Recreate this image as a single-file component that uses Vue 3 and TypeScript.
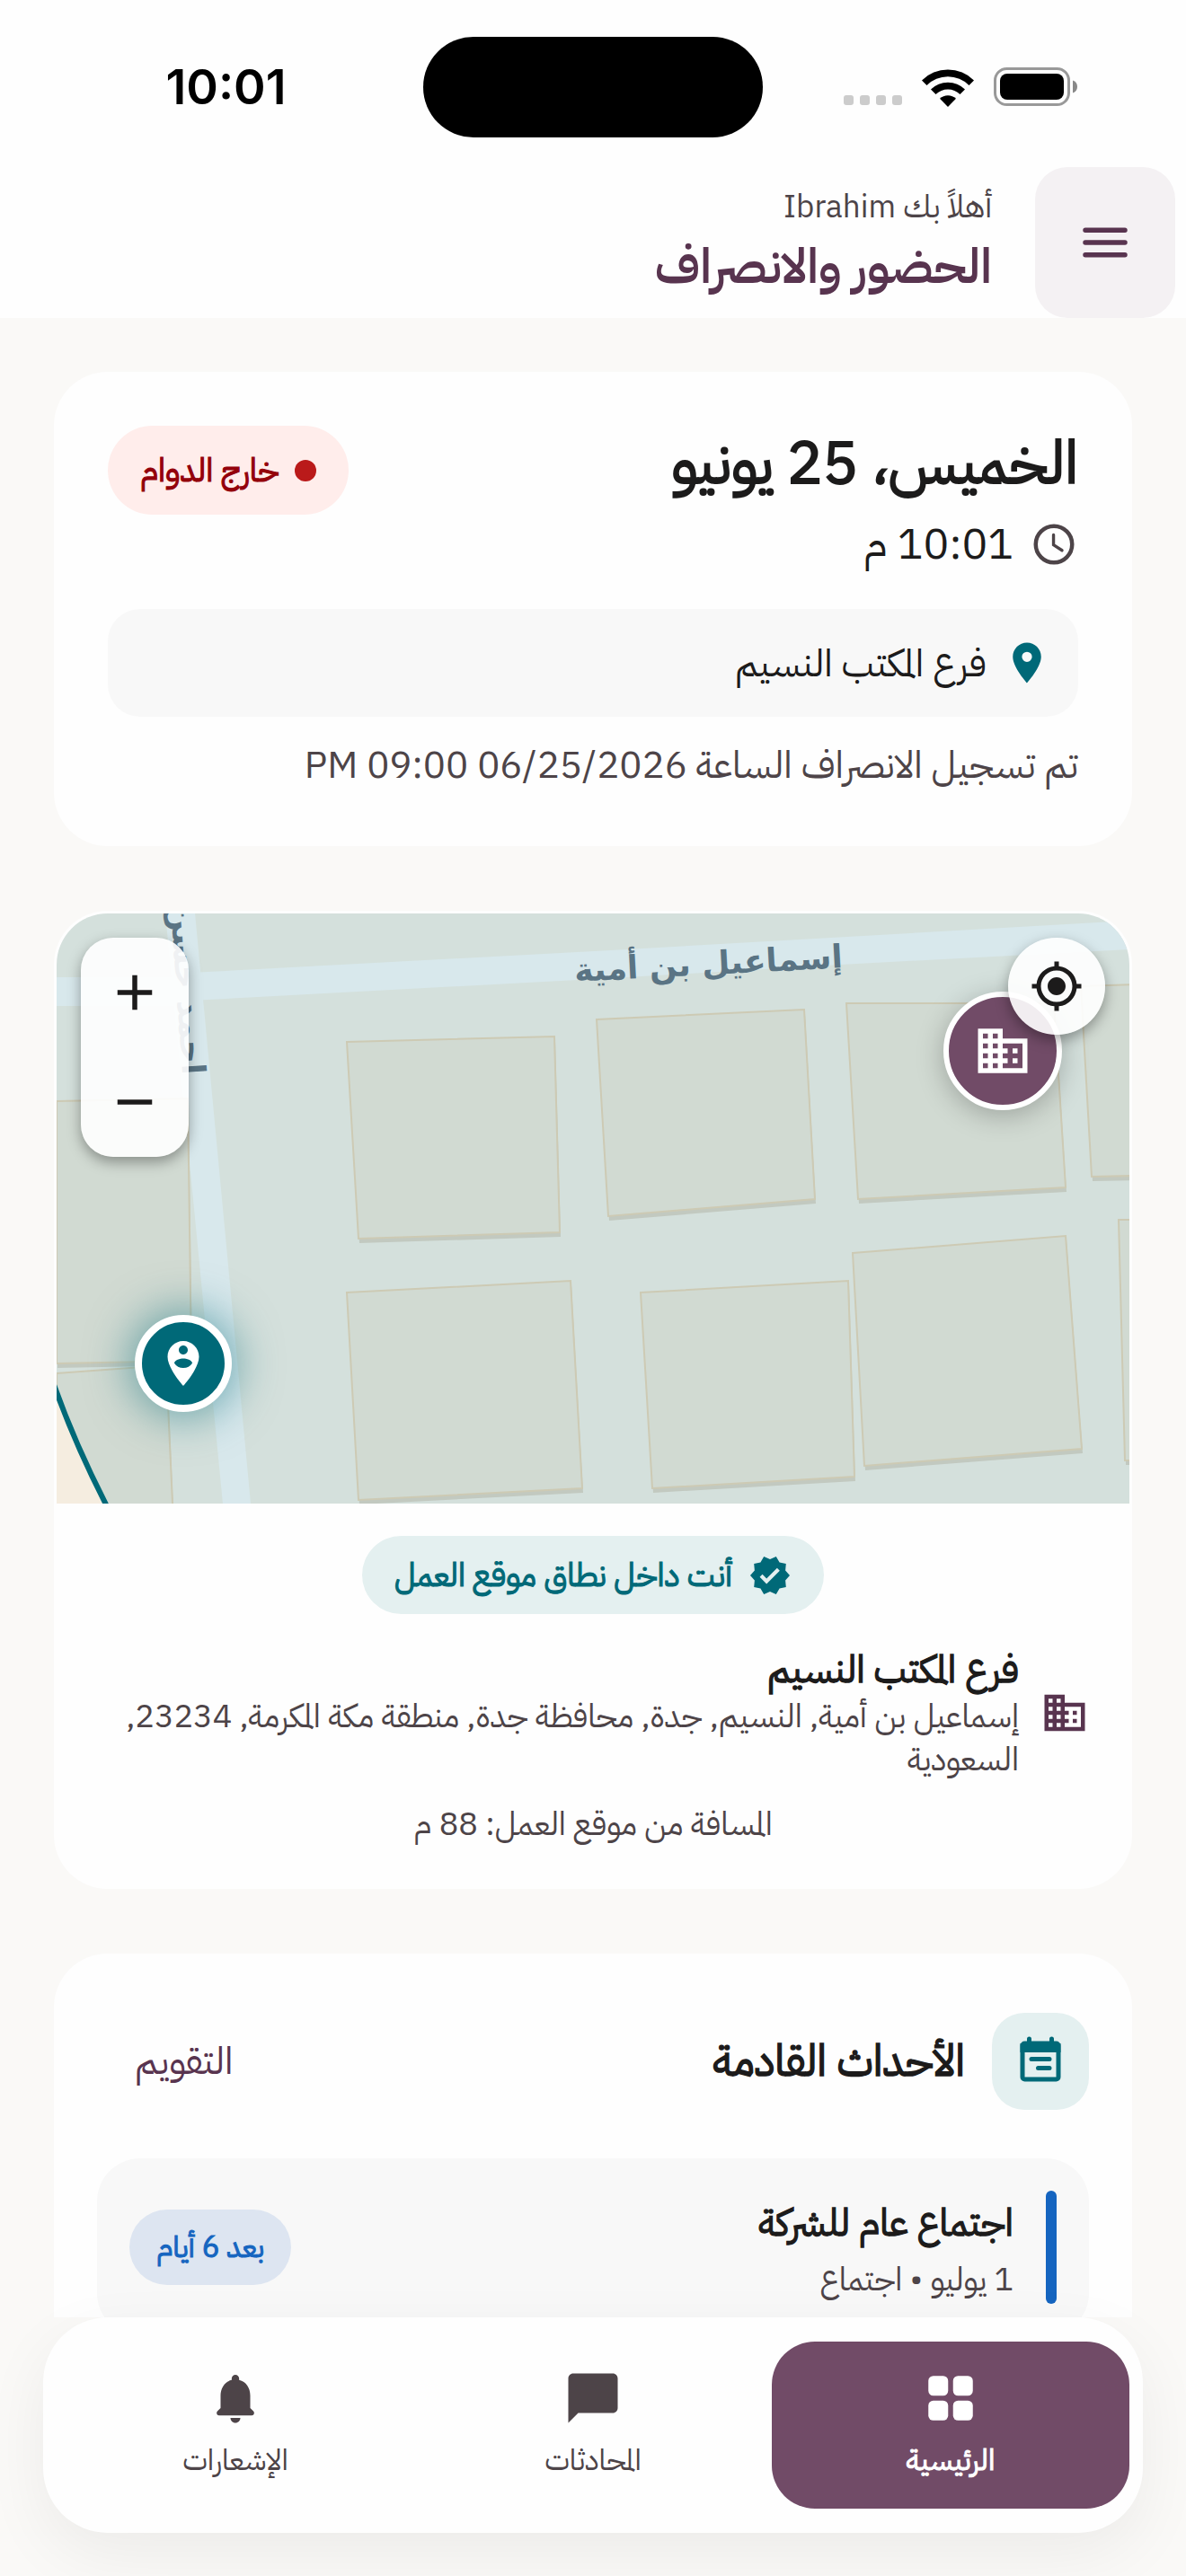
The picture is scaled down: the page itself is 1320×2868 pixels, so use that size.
<script setup lang="ts">
interface Tab {
  id: string
  label: string
}

interface CompanyEvent {
  title: string
  detail: string
  due: string
}

const tabs: Tab[] = [
  { id: 'home', label: 'الرئيسية' },
  { id: 'chats', label: 'المحادثات' },
  { id: 'alerts', label: 'الإشعارات' },
]
const activeTab = 'home'

const events: CompanyEvent[] = [
  { title: 'اجتماع عام للشركة', detail: '1 يوليو • اجتماع', due: 'بعد 6 أيام' },
]

const blocks: string[] = [
  '0,209 146,206 150,498 0,501',
  '0,512 122,503 129,657 129,670 0,670',
  '323,143 554,137 560,355 336,362',
  '323,422 572,409 585,640 336,653',
  '601,118 832,107 844,318 614,337',
  '879,100 1110,100 1123,305 892,318',
  '1140,81 1200,79 1200,292 1152,293',
  '650,422 881,409 888,627 663,640',
  '886,378 1123,359 1141,596 899,615',
  '1182,341 1200,341 1200,609 1189,609',
]
</script>

<template>
  <div class="app" dir="rtl">
    <div class="status" dir="ltr">
      <span class="clock">10:01</span>
      <span class="island"></span>
      <span class="indicators">
        <span class="cell"><i></i><i></i><i></i><i></i></span>
        <svg class="wifi" viewBox="0 0 58 43" aria-hidden="true">
          <path d="M0 13.500A41 41 0 0 1 58 13.500L52.500 19A33.500 33.500 0 0 0 5.500 19Z" />
          <path d="M10 23.500A27 27 0 0 1 48 23.500L42.500 29A19.500 19.500 0 0 0 15.500 29Z" />
          <path d="M20 33.800A13 13 0 0 1 38 33.800L29 43Z" />
        </svg>
        <svg class="battery" viewBox="0 0 94 44" aria-hidden="true">
          <rect x="1.500" y="1.500" width="82" height="40" rx="13" fill="none" stroke="#999" stroke-width="3" />
          <rect x="7" y="7" width="71" height="29" rx="8" />
          <path d="M88 14.500C91 15.500 93 18 93 21.500S91 27.500 88 28.500Z" fill="#888" />
        </svg>
      </span>
    </div>

    <header class="header">
      <button class="menu" type="button" aria-label="القائمة">
        <svg viewBox="0 0 24 24" fill="none" stroke="currentColor" stroke-width="2" stroke-linecap="round">
          <path d="M4 7h16M4 12h16M4 17h16" />
        </svg>
      </button>
      <div class="greeting">
        <p>أهلاً بك Ibrahim</p>
        <h1>الحضور والانصراف</h1>
      </div>
    </header>

    <main class="content">
      <section class="card today">
        <div class="today-top">
          <div>
            <h2 class="date strong">الخميس، 25 يونيو</h2>
            <p class="time">
              <svg viewBox="0 0 24 24" fill="none" stroke="currentColor" aria-hidden="true">
                <circle cx="12" cy="12" r="9" stroke-width="2" />
                <path d="M11.800 7.300V12.300L16 15" stroke-width="1.500" stroke-linecap="round" />
              </svg>
              <span>10:01 م</span>
            </p>
          </div>
          <span class="shift strong"><i></i>خارج الدوام</span>
        </div>
        <p class="place">
          <svg viewBox="0 0 24 24" fill="currentColor" aria-hidden="true">
            <path d="M12 2C8.130 2 5 5.130 5 9c0 5.250 7 13 7 13s7-7.750 7-13c0-3.870-3.130-7-7-7zm0 9.500a2.500 2.500 0 0 1 0-5 2.500 2.500 0 0 1 0 5z" />
          </svg>
          <span>فرع المكتب النسيم</span>
        </p>
        <p class="log">تم تسجيل الانصراف الساعة 06/25/2026 09:00 PM</p>
      </section>

      <section class="card site">
        <div class="map">
          <svg class="tiles" viewBox="0 0 1194 657" direction="rtl">
            <rect width="1194" height="657" fill="#d4e0dc" />
            <g fill="#d8e8ec">
              <path d="M121 0H154L216 657H185Z" />
              <path d="M0 71H135V103H0Z" />
              <path d="M130 67L617 41L1194 8V40L872 57L617 72L130 98Z" />
            </g>
            <g v-for="block in blocks" :key="block">
              <polygon :points="block" fill="#c2c9c0" transform="translate(1 5)" />
              <polygon :points="block" fill="#d1dad2" stroke="#cdcab4" stroke-width="2" />
            </g>
            <path d="M-4 527Q20 590 57 660H-4Z" fill="#f5ede0" />
            <path d="M-4 522Q20 590 57 662" fill="none" stroke="#006978" stroke-width="6" />
            <g class="street">
              <text x="726" y="68" text-anchor="middle" transform="rotate(-3 726 68)">إسماعيل بن أمية</text>
              <text x="140" y="180" text-anchor="start" transform="rotate(86 140 180)">احمد حسن</text>
            </g>
          </svg>
          <span class="pin branch-pin">
            <svg viewBox="0 0 24 24" fill="currentColor" aria-hidden="true">
              <path d="M12 7V3H2v18h20V7H12zM6 19H4v-2h2v2zm0-4H4v-2h2v2zm0-4H4V9h2v2zm0-4H4V5h2v2zm4 12H8v-2h2v2zm0-4H8v-2h2v2zm0-4H8V9h2v2zm0-4H8V5h2v2zm10 12h-8v-2h2v-2h-2v-2h2v-2h-2V9h8v10zm-2-8h-2v2h2v-2zm0 4h-2v2h2v-2z" />
            </svg>
          </span>
          <span class="pin user-pin">
            <svg viewBox="0 0 24 24" fill="currentColor" aria-hidden="true">
              <path d="M12 2C8.140 2 5 5.140 5 9c0 5.250 7 13 7 13s7-7.750 7-13c0-3.860-3.140-7-7-7zm0 2c1.100 0 2 .9 2 2 0 1.110-.9 2-2 2s-2-.89-2-2c0-1.100.9-2 2-2zm0 10c-1.670 0-3.140-.85-4-2.150.02-1.320 2.670-2.050 4-2.050s3.980.73 4 2.050c-.86 1.300-2.330 2.150-4 2.150z" />
            </svg>
          </span>
          <div class="zoom">
            <button type="button" aria-label="تكبير">
              <svg viewBox="0 0 24 24" fill="none" stroke="currentColor" stroke-width="2"><path d="M5 12h14M12 5v14" /></svg>
            </button>
            <button type="button" aria-label="تصغير">
              <svg viewBox="0 0 24 24" fill="none" stroke="currentColor" stroke-width="2"><path d="M5 12h14" /></svg>
            </button>
          </div>
          <button class="locate" type="button" aria-label="موقعي">
            <svg viewBox="0 0 24 24" fill="currentColor">
              <path d="M12 8c-2.210 0-4 1.790-4 4s1.790 4 4 4 4-1.790 4-4-1.790-4-4-4zm8.940 3A8.994 8.994 0 0 0 13 3.060V1h-2v2.060A8.994 8.994 0 0 0 3.060 11H1v2h2.060A8.994 8.994 0 0 0 11 20.940V23h2v-2.060A8.994 8.994 0 0 0 20.940 13H23v-2h-2.060zM12 19c-3.870 0-7-3.130-7-7s3.130-7 7-7 7 3.130 7 7-3.130 7-7 7z" />
            </svg>
          </button>
        </div>
        <div class="site-info">
          <span class="range strong">
            <svg viewBox="0 0 24 24" fill="currentColor" aria-hidden="true">
              <path d="M23 12l-2.440-2.790.34-3.690-3.610-.82-1.890-3.200L12 2.960 8.600 1.500 6.710 4.690 3.100 5.500l.34 3.700L1 12l2.440 2.790-.34 3.700 3.610.82L8.600 22.500l3.400-1.470 3.400 1.460 1.890-3.190 3.610-.82-.34-3.690L23 12zm-12.910 4.720l-3.800-3.810 1.480-1.480 2.320 2.330 5.850-5.870 1.480 1.480-7.330 7.350z" />
            </svg>
            أنت داخل نطاق موقع العمل
          </span>
          <div class="branch">
            <svg viewBox="0 0 24 24" fill="currentColor" aria-hidden="true">
              <path d="M12 7V3H2v18h20V7H12zM6 19H4v-2h2v2zm0-4H4v-2h2v2zm0-4H4V9h2v2zm0-4H4V5h2v2zm4 12H8v-2h2v2zm0-4H8v-2h2v2zm0-4H8V9h2v2zm0-4H8V5h2v2zm10 12h-8v-2h2v-2h-2v-2h2v-2h-2V9h8v10zm-2-8h-2v2h2v-2zm0 4h-2v2h2v-2z" />
            </svg>
            <div>
              <h3 class="strong">فرع المكتب النسيم</h3>
              <p>إسماعيل بن أمية, النسيم, جدة, محافظة جدة, منطقة مكة المكرمة, 23234, السعودية</p>
            </div>
          </div>
          <p class="distance">المسافة من موقع العمل: 88 م</p>
        </div>
      </section>

      <section class="card upcoming">
        <div class="upcoming-head">
          <span class="badge-icon">
            <svg viewBox="0 0 24 24" fill="none" stroke="currentColor" stroke-width="2" stroke-linecap="round" aria-hidden="true">
              <rect x="4" y="4" width="16" height="16" rx="1" />
              <path d="M4 5H20V7H4ZM7 2V4M17 2V4M8 11H16M11 15H16" />
            </svg>
          </span>
          <h2 class="strong">الأحداث القادمة</h2>
          <button class="calendar" type="button">التقويم</button>
        </div>
        <article v-for="event in events" :key="event.title" class="event">
          <span class="bar"></span>
          <div class="event-text">
            <h3 class="strong">{{ event.title }}</h3>
            <p>{{ event.detail }}</p>
          </div>
          <span class="due strong">{{ event.due }}</span>
        </article>
      </section>
    </main>

    <footer class="dock">
      <nav class="tabs">
        <button
          v-for="tab in tabs"
          :key="tab.id"
          type="button"
          class="tab"
          :class="{ active: tab.id === activeTab }"
        >
          <svg viewBox="0 0 24 24" fill="currentColor" aria-hidden="true">
            <g v-if="tab.id === 'home'">
              <rect x="3" y="3" width="8" height="8" rx="2" />
              <rect x="13" y="3" width="8" height="8" rx="2" />
              <rect x="3" y="13" width="8" height="8" rx="2" />
              <rect x="13" y="13" width="8" height="8" rx="2" />
            </g>
            <path v-else-if="tab.id === 'chats'" d="M20 2H4c-1.100 0-2 .9-2 2v18l4-4h14c1.100 0 2-.9 2-2V4c0-1.100-.9-2-2-2z" />
            <path v-else d="M12 22c1.100 0 2-.9 2-2h-4c0 1.100.89 2 2 2zm6-6v-5c0-3.070-1.630-5.640-4.500-6.320V4c0-.83-.67-1.500-1.500-1.500s-1.500.67-1.500 1.500v.68C7.640 5.360 6 7.920 6 11v5l-1.290 1.290c-.63.63-.19 1.710.7 1.710h13.170c.89 0 1.340-1.080.71-1.710L18 16z" />
          </svg>
          <span :class="{ strong: tab.id === activeTab }">{{ tab.label }}</span>
        </button>
      </nav>
    </footer>
  </div>
</template>

<style>
body {
  margin: 0;
  background: #faf9f7;
}
</style>

<style scoped>
.app {
  display: flex;
  flex-direction: column;
  height: 100vh;
  background: #faf9f7;
  color: #1c1b1b;
  font-family: "IBM Plex Sans Arabic", "Noto Sans Arabic", "Noto Sans", sans-serif;
  font-feature-settings: "dlig", "locl" 0;
}
.app * {
  box-sizing: border-box;
}
h1,
h2,
h3,
p {
  margin: 0;
}
button {
  border: 0;
  padding: 0;
  background: none;
  color: inherit;
  font: inherit;
  font-feature-settings: inherit;
  cursor: pointer;
}
svg {
  display: block;
  flex: none;
}
/* Emphasis keeps the regular letterforms and thickens their outline. */
.strong {
  font-weight: 400;
  -webkit-text-stroke: 0.03em currentColor;
}

.status {
  display: grid;
  grid-template-columns: 1fr 378px 1fr;
  align-items: center;
  height: 186px;
  padding-top: 8px;
  background: #fefefe;
  flex: none;
}
.clock {
  padding-left: 32px;
  text-align: center;
  color: #000;
  font: 600 54px/64px Inter, sans-serif;
}
.island {
  height: 112px;
  border-radius: 56px;
  background: #000;
}
.indicators {
  display: flex;
  align-items: center;
  justify-content: flex-end;
  padding-right: 120px;
}
.cell {
  display: flex;
  gap: 7px;
  margin: 29px 22px 0 0;
}
.cell i {
  width: 11px;
  height: 11px;
  border-radius: 3px;
  background: #ccc;
}
.wifi {
  width: 58px;
  height: 43px;
  margin-right: 22px;
}
.battery {
  width: 94px;
  height: 44px;
}

.header {
  display: flex;
  align-items: center;
  gap: 48px;
  padding-right: 12px;
  background: #fefefe;
  flex: none;
}
.menu {
  display: grid;
  place-items: center;
  width: 156px;
  height: 168px;
  border-radius: 36px;
  background: #f4f1f3;
  color: #58344f;
}
.menu svg {
  width: 66px;
  height: 66px;
}
.greeting p {
  color: #4d4448;
  font-size: 35px;
  line-height: 54px;
}
.greeting h1 {
  color: #58344f;
  font-size: 54px;
  font-weight: 600;
  line-height: 78px;
}

.content {
  display: flex;
  flex: 1;
  flex-direction: column;
  gap: 72px;
  min-height: 0;
  overflow-y: auto;
  padding: 60px 60px 0;
  scrollbar-width: none;
}
.card {
  flex: none;
  border-radius: 60px;
  background: #fefefe;
}

.today {
  padding: 60px;
}
.today-top {
  display: flex;
  align-items: flex-start;
  justify-content: space-between;
}
.date {
  margin-bottom: 12px;
  font-size: 66px;
  line-height: 84px;
}
.time {
  display: flex;
  align-items: center;
  gap: 18px;
  font-size: 48px;
  line-height: 72px;
}
.time svg {
  width: 54px;
  height: 54px;
  color: #4d4448;
}
.shift {
  display: flex;
  align-items: center;
  gap: 18px;
  height: 99px;
  padding: 0 36px;
  border-radius: 50px;
  background: #ffedeb;
  color: #93000a;
  font-size: 36px;
}
.shift i {
  width: 24px;
  height: 24px;
  border-radius: 50%;
  background: #ba1a1a;
}
.place {
  display: flex;
  align-items: center;
  gap: 18px;
  height: 120px;
  margin: 36px 0 24px;
  padding: 0 30px;
  border-radius: 36px;
  background: #f8f8f8;
  font-size: 42px;
}
.place svg {
  width: 54px;
  height: 54px;
  color: #006978;
}
.log {
  color: #4d4448;
  font-size: 42px;
  line-height: 60px;
}

.site {
  padding: 3px;
}
.map {
  position: relative;
  overflow: hidden;
  border-radius: 57px 57px 0 0;
}
.tiles {
  width: 100%;
  height: auto;
}
.street {
  fill: #5a7484;
  font: 700 36px "DejaVu Sans", sans-serif;
}
.pin {
  position: absolute;
  display: grid;
  place-items: center;
  border: solid #fff;
  border-radius: 50%;
  color: #fff;
}
.branch-pin {
  top: 87px;
  right: 75px;
  width: 132px;
  height: 132px;
  border-width: 6px;
  background: #714b67;
  box-shadow: 0 6px 30px rgba(0, 0, 0, 0.25);
}
.branch-pin svg {
  width: 66px;
  height: 66px;
}
.user-pin {
  top: 447px;
  left: 87px;
  width: 108px;
  height: 108px;
  border-width: 8px;
  background: #006978;
  box-shadow: 0 0 48px 6px rgba(0, 105, 120, 0.5);
}
.user-pin svg {
  width: 60px;
  height: 60px;
}
.zoom {
  position: absolute;
  top: 27px;
  left: 27px;
  display: grid;
  width: 120px;
  border-radius: 36px;
  background: rgba(255, 255, 255, 0.9);
  box-shadow: 0 6px 15px rgba(0, 0, 0, 0.35);
}
.zoom button {
  display: grid;
  place-items: center;
  height: 122px;
}
.zoom svg {
  width: 66px;
  height: 66px;
}
.locate {
  position: absolute;
  top: 27px;
  right: 27px;
  display: grid;
  place-items: center;
  width: 108px;
  height: 108px;
  border-radius: 50%;
  background: rgba(255, 255, 255, 0.9);
  box-shadow: 0 6px 15px rgba(0, 0, 0, 0.35);
}
.locate svg {
  width: 60px;
  height: 60px;
}
.site-info {
  display: flex;
  flex-direction: column;
  align-items: center;
  padding: 36px 45px 45px;
}
.range {
  display: flex;
  align-items: center;
  gap: 18px;
  height: 87px;
  margin-bottom: 33px;
  padding: 0 36px;
  border-radius: 44px;
  background: #e4f0f0;
  color: #006978;
  font-size: 36px;
}
.range svg {
  width: 48px;
  height: 48px;
}
.branch {
  display: flex;
  align-items: center;
  align-self: stretch;
  gap: 24px;
}
.branch svg {
  width: 54px;
  height: 54px;
  color: #58344f;
}
.branch h3 {
  font-size: 42px;
  line-height: 57px;
}
.branch p,
.distance {
  color: #4d4448;
  font-size: 36px;
  line-height: 48px;
}
.distance {
  margin-top: 24px;
}

.upcoming {
  padding: 66px 48px 48px;
}
.upcoming-head {
  display: flex;
  align-items: center;
  gap: 30px;
  margin-bottom: 54px;
}
.badge-icon {
  display: grid;
  place-items: center;
  width: 108px;
  height: 108px;
  border-radius: 36px;
  background: #e4f0f0;
  color: #006978;
}
.badge-icon svg {
  width: 60px;
  height: 60px;
}
.upcoming h2 {
  flex: 1;
  font-size: 48px;
  line-height: 72px;
}
.calendar {
  padding: 0 42px;
  color: #58344f;
  font-size: 42px;
  line-height: 72px;
}
.event {
  display: flex;
  align-items: center;
  gap: 36px;
  padding: 36px;
  border-radius: 48px;
  background: #f8f8f8;
}
.bar {
  align-self: stretch;
  width: 12px;
  border-radius: 6px;
  background: #1565c0;
}
.event-text {
  flex: 1;
}
.event h3 {
  font-size: 42px;
  line-height: 72px;
}
.event p {
  color: #4d4448;
  font-size: 36px;
  line-height: 54px;
}
.due {
  padding: 0 30px;
  border-radius: 42px;
  background: #dde5f1;
  color: #1565c0;
  font-size: 33px;
  line-height: 84px;
}

.dock {
  position: relative;
  flex: none;
  padding: 0 48px 48px;
}
.tabs {
  display: grid;
  grid-template-columns: repeat(3, 1fr);
  height: 240px;
  padding: 27px 15px;
  border-radius: 72px;
  background: #fefefe;
  box-shadow: 0 24px 72px rgba(0, 0, 0, 0.06);
}
.tab {
  display: flex;
  flex-direction: column;
  align-items: center;
  justify-content: center;
  gap: 12px;
  border-radius: 48px;
  color: #4d4448;
  font-size: 33px;
  line-height: 48px;
}
.tab svg {
  width: 66px;
  height: 66px;
}
.tab.active {
  background: #714b67;
  color: #fff;
}
</style>
